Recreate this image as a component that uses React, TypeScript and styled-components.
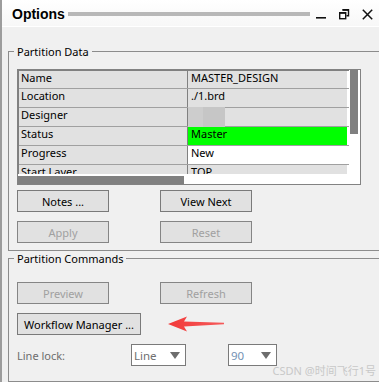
import styled, { createGlobalStyle } from "styled-components";

const GlobalStyle = createGlobalStyle`
  html, body {
    margin: 0;
    padding: 0;
    background: #f0f0f0;
    overflow: hidden;
  }
  body {
    font-family: "Noto Sans", "Segoe UI", sans-serif;
    font-size: 11px;
    color: #000;
  }
`;

type Row = { key: string; value: string; tone?: "gray" | "green" | "white"; blur?: boolean };

const rows: Row[] = [
  { key: "Name", value: "MASTER_DESIGN" },
  { key: "Location", value: "./1.brd" },
  { key: "Designer", value: "", blur: true },
  { key: "Status", value: "Master", tone: "green" },
  { key: "Progress", value: "New", tone: "white" },
  { key: "Start Layer", value: "TOP" },
];

const cellBg = { gray: "#e1e1e1", green: "#00ff00", white: "#ffffff" };

export default function App() {
  return (
    <Window>
      <GlobalStyle />
      <TitleBar>
        <Title>Options</Title>
        <Grip />
        <Ctrl>
          <svg width="11" height="11" viewBox="0 0 11 11">
            <rect x="0" y="8" width="10" height="1.6" fill="#111" />
          </svg>
        </Ctrl>
        <Ctrl>
          <svg width="11" height="11" viewBox="0 0 11 11">
            <path d="M3.5 0.8h6v6h-2" fill="none" stroke="#111" strokeWidth="1.4" />
            <rect x="0.7" y="3.7" width="6" height="6" fill="none" stroke="#111" strokeWidth="1.4" />
            <rect x="0.7" y="3.2" width="6" height="1.6" fill="#111" />
            <rect x="3.5" y="0.2" width="6" height="1.6" fill="#111" />
          </svg>
        </Ctrl>
        <Ctrl>
          <svg width="11" height="11" viewBox="0 0 11 11">
            <path d="M0.8 0.8L10.2 10.2M10.2 0.8L0.8 10.2" stroke="#111" strokeWidth="1.5" />
          </svg>
        </Ctrl>
      </TitleBar>

      <Body>
        <Group>
          <Legend>Partition Data</Legend>
          <Stack>
            <Table>
              <TableMain>
                <Viewport>
                  {rows.map((r) => (
                    <DataRow key={r.key}>
                      <KeyCell>{r.key}</KeyCell>
                      <ValueCell $bg={cellBg[r.tone ?? "gray"]}>
                        {r.blur ? (
                          <>
                            <Blur $c="#cdcdcd" $w={15} />
                            <Blur $c="#c6c6c6" $w={22} />
                          </>
                        ) : (
                          r.value
                        )}
                      </ValueCell>
                    </DataRow>
                  ))}
                </Viewport>
                <HScroll>
                  <HThumb />
                </HScroll>
              </TableMain>
              <VScroll>
                <VThumb />
              </VScroll>
            </Table>
            <ButtonRow $mt={5}>
              <Btn $w={92}>Notes ...</Btn>
              <Btn $w={92}>View Next</Btn>
            </ButtonRow>
            <ButtonRow>
              <Btn $w={92} disabled>
                Apply
              </Btn>
              <Btn $w={92} disabled>
                Reset
              </Btn>
            </ButtonRow>
          </Stack>
        </Group>

        <Group $fill>
          <Legend>Partition Commands</Legend>
          <Stack $top={16}>
            <ButtonRow $mt={0}>
              <Btn $w={92} disabled>
                Preview
              </Btn>
              <Btn $w={92} disabled>
                Refresh
              </Btn>
            </ButtonRow>
            <ButtonRow>
              <Btn $w={124}>Workflow Manager ...</Btn>
              <Arrow width="57" height="16" viewBox="0 0 57 16">
                <defs>
                  <linearGradient id="ag" x1="0" x2="1" y1="0" y2="0">
                    <stop offset="0" stopColor="#f23a3a" />
                    <stop offset="1" stopColor="#f55a5a" />
                  </linearGradient>
                </defs>
                <path d="M0 8 L19 0.5 L16 5.5 L56 6.8 L56 8.2 L16 10.5 L19 15.5 Z" fill="url(#ag)" />
              </Arrow>
            </ButtonRow>
            <LockRow>
              <LockLabel>Line lock:</LockLabel>
              <Select $w={55} $color="#707070">
                Line
                <Caret />
              </Select>
              <Select $w={49} $color="#7592b4">
                90
                <Caret />
              </Select>
            </LockRow>
          </Stack>
        </Group>
      </Body>

      <Watermark>CSDN @时间飞行1号</Watermark>
    </Window>
  );
}

const Window = styled.div`
  position: relative;
  width: 379px;
  height: 382px;
  box-sizing: border-box;
  border-left: 2px solid #9c9c9c;
  background: #f0f0f0;
  display: flex;
  flex-direction: column;
  overflow: hidden;
`;

const TitleBar = styled.div`
  height: 27px;
  flex: none;
  box-sizing: border-box;
  padding: 2px 0 0 10px;
  display: flex;
  align-items: center;
  background: linear-gradient(#ffffff, #f7f7f7);
  border-bottom: 1px solid #ffffff;
`;

const Title = styled.div`
  font-family: "Liberation Sans", Arial, sans-serif;
  font-weight: bold;
  font-size: 14px;
  color: #000;
`;

const Grip = styled.div`
  flex: 1;
  height: 4px;
  margin-left: 3px;
  background: #b8b8b8;
`;

const Ctrl = styled.div`
  width: 23px;
  display: flex;
  justify-content: center;
  align-items: center;
`;

const Body = styled.div`
  flex: 1;
  display: flex;
  flex-direction: column;
  padding: 17px 0 0 6px;
  min-height: 0;
`;

const Group = styled.fieldset<{ $fill?: boolean }>`
  margin: 0 -12px 0 0;
  padding: 0 0 7px 8px;
  min-width: 0;
  border: 1px solid #8c8c8c;
  flex: ${({ $fill }) => ($fill ? 1 : "none")};
`;

const Legend = styled.legend`
  margin-left: -3px;
  padding: 0 3px;
  font-size: 11px;
  line-height: 15px;
  color: #000;
`;

const Stack = styled.div<{ $top?: number }>`
  display: flex;
  flex-direction: column;
  padding-top: ${({ $top }) => $top ?? 10}px;
`;

const Table = styled.div`
  width: 344px;
  height: 116px;
  box-sizing: border-box;
  border: 1px solid #828282;
  background: #fff;
  display: flex;
`;

const TableMain = styled.div`
  flex: 1;
  display: flex;
  flex-direction: column;
  min-width: 0;
`;

const Viewport = styled.div`
  height: 103px;
  overflow: hidden;
  border-left: 1px solid #808080;
  border-top: 1px solid #808080;
`;

const DataRow = styled.div`
  display: flex;
  height: 18px;
  border-bottom: 1px solid #a0a0a0;
  &:first-child {
    height: 17px;
  }
`;

const KeyCell = styled.div`
  width: 169px;
  border-right: 1px solid #808080;
  background: #e1e1e1;
  padding: 1px 2px 0;
  box-sizing: border-box;
  line-height: 12px;
  white-space: nowrap;
`;

const ValueCell = styled.div<{ $bg: string }>`
  width: 159px;
  background: ${({ $bg }) => $bg};
  padding: 1px 3px 0;
  box-sizing: border-box;
  line-height: 12px;
  white-space: nowrap;
  display: flex;
  align-items: flex-start;
`;

const Blur = styled.span<{ $c: string; $w: number }>`
  display: block;
  width: ${({ $w }) => $w}px;
  height: 20px;
  margin-top: -2px;
  background: ${({ $c }) => $c};
  &:first-child {
    margin-left: -3px;
  }
`;

const HScroll = styled.div`
  flex: 1;
  padding-top: 2px;
`;

const HThumb = styled.div`
  width: 166px;
  height: 8px;
  background: #808080;
`;

const VScroll = styled.div`
  width: 11px;
  padding-left: 1px;
  box-sizing: border-box;
`;

const VThumb = styled.div`
  width: 8px;
  height: 64px;
  background: #808080;
`;

const ButtonRow = styled.div<{ $mt?: number }>`
  display: flex;
  align-items: center;
  gap: 51px;
  margin-top: ${({ $mt }) => $mt ?? 9}px;
`;

const Btn = styled.button<{ $w: number }>`
  width: ${({ $w }) => $w}px;
  height: 22px;
  padding: 0;
  box-sizing: border-box;
  border: 1px solid #7a7a7a;
  border-radius: 0;
  background: #e1e1e1;
  font-family: inherit;
  font-size: 11px;
  color: #000;
  &:disabled {
    color: #a0a0a0;
    border-color: #858585;
  }
`;

const Arrow = styled.svg`
  margin-left: -24px;
  display: block;
`;

const LockRow = styled.div`
  display: flex;
  align-items: center;
  margin-top: 9px;
`;

const LockLabel = styled.div`
  width: 114px;
  color: #6d6d6d;
`;

const Select = styled.div<{ $w: number; $color: string }>`
  width: ${({ $w }) => $w}px;
  height: 22px;
  box-sizing: border-box;
  margin-right: 42px;
  padding: 0 5px 0 2px;
  border: 1px solid #7a7a7a;
  background: #fff;
  color: ${({ $color }) => $color};
  font-size: 11.5px;
  display: flex;
  align-items: center;
  justify-content: space-between;
`;

const Caret = styled.span`
  width: 0;
  height: 0;
  border-left: 5px solid transparent;
  border-right: 5px solid transparent;
  border-top: 7px solid #6d6d6d;
`;

const Watermark = styled.div`
  position: absolute;
  right: 3px;
  bottom: 4px;
  font-family: "Noto Sans", "Noto Sans CJK SC", sans-serif;
  font-size: 11px;
  color: #c8c8c8;
`;
